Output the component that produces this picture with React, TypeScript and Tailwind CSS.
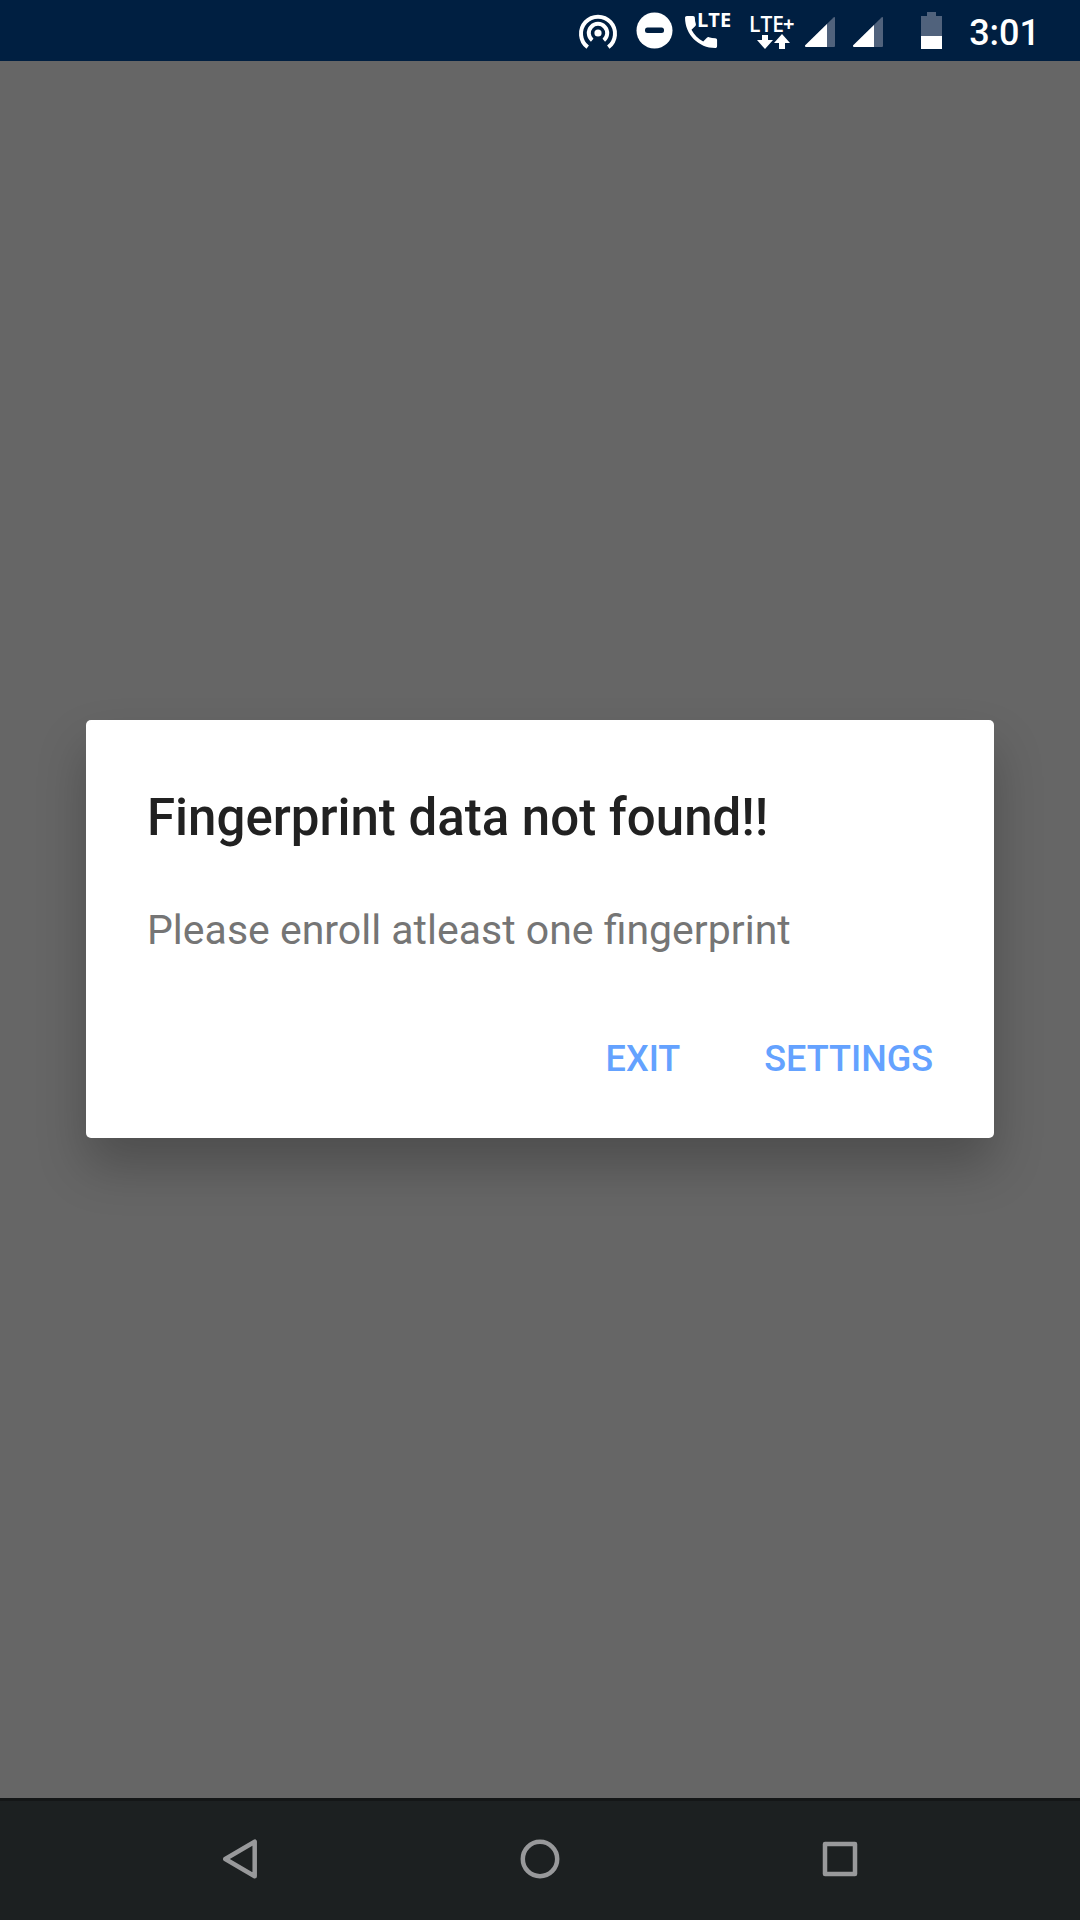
import React from "react";

function HotspotIcon() {
  return (
    <svg className="mr-[18px] h-[41px] w-10" viewBox="0 0 40 41" fill="none" stroke="#fff" strokeWidth="4" role="img" aria-label="Hotspot">
      <path d="M9.7 37.2 A17 17 0 1 1 30.3 37.2" />
      <path d="M14.2 30.2 A9.2 9.2 0 1 1 25.8 30.2" />
      <circle cx="20" cy="23" r="3.6" fill="#fff" stroke="none" />
    </svg>
  );
}

function DoNotDisturbIcon() {
  return (
    <svg className="mr-[10px] h-[41px] w-[38px]" viewBox="0 0 38 41" role="img" aria-label="Do not disturb">
      <circle cx="18.5" cy="20.5" r="18" fill="#fff" />
      <rect x="9" y="17.5" width="19" height="5.5" rx="2.5" fill="#001f41" />
    </svg>
  );
}

function LteCallIcon() {
  return (
    <svg className="mr-[18px] h-[41px] w-[48px] overflow-visible" viewBox="0 0 48 41" fill="#fff">
      <path
        transform="translate(-4.3 .6) scale(1.78)"
        d="M6.62 10.79c1.44 2.83 3.76 5.14 6.59 6.59l2.2-2.2c.27-.27.67-.36 1.02-.24 1.12.37 2.33.57 3.57.57.55 0 1 .45 1 1V20c0 .55-.45 1-1 1-9.39 0-17-7.61-17-17 0-.55.45-1 1-1h3.5c.55 0 1 .45 1 1 0 1.25.2 2.45.57 3.57.11.35.03.74-.25 1.02l-2.2 2.2z"
      />
      <text x="13" y="17" fontSize="20" fontWeight="700" fontFamily="'Open Sans', sans-serif">LTE</text>
    </svg>
  );
}

function LteDataIcon() {
  return (
    <svg className="mr-[9px] h-[41px] w-[46px] overflow-visible" viewBox="0 0 46 41" fill="#fff">
      <text x="-1" y="22" fontSize="21" fontWeight="600" fontFamily="'Open Sans', sans-serif">LTE</text>
      <text x="33" y="21" fontSize="20" fontWeight="700" fontFamily="'Open Sans', sans-serif">+</text>
      <path d="M12 25h6v5h5l-8 9-8-9h5z" />
      <path d="M29 39h6v-6h5l-8-9-8 9h5z" />
    </svg>
  );
}

function SignalIcon({ level }: { level: number }) {
  return (
    <svg className="mr-[18px] h-[41px] w-[30px]" viewBox="0 0 30 41" role="img" aria-label="Signal">
      <path d="M1 37Q0 37 0 35.500L28.500 7.500Q30 6.500 30 8V36Q30 37 29 37z" fill="#50627c" />
      <path d={`M1 37Q0 37 0 35.500L${level} ${36 - level}V37z`} fill="#fff" />
    </svg>
  );
}

function BatteryIcon() {
  return (
    <svg className="mr-[27px] ml-5 h-[41px] w-[21px]" viewBox="0 0 21 41" role="img" aria-label="Battery">
      <path d="M6 2h9v4h6v20H0V6h6z" fill="#50627c" />
      <path d="M0 26h21v13H0z" fill="#fff" />
    </svg>
  );
}

function StatusBar() {
  return (
    <header className="flex h-[61px] items-center justify-end bg-[#001f41] pr-10 text-white">
      <HotspotIcon />
      <DoNotDisturbIcon />
      <LteCallIcon />
      <LteDataIcon />
      <SignalIcon level={22} />
      <SignalIcon level={21} />
      <BatteryIcon />
      <time className="pt-1 text-[36px] leading-[44px] font-medium">3:01</time>
    </header>
  );
}

function FingerprintDialog() {
  return (
    <section
      role="alertdialog"
      aria-labelledby="dialog-title"
      aria-describedby="dialog-message"
      className="w-full rounded-[5px] bg-white pt-[67px] pb-[37px] shadow-[0_28px_50px_rgba(0,0,0,0.24)]"
    >
      <h1 id="dialog-title" className="px-[61px] text-[51px] leading-[62px] font-medium text-[#212121]">
        Fingerprint data not found!!
      </h1>
      <p id="dialog-message" className="mt-14 px-[61px] text-[41px] leading-[50px] text-[#757575]">
        Please enroll atleast one fingerprint
      </p>
      <div className="mt-[62px] flex justify-end gap-[42px] px-10 text-[36px] leading-[44px] font-medium text-[#64a2ff]">
        <button type="button" className="h-[84px] px-[21px]">EXIT</button>
        <button type="button" className="h-[84px] px-[21px]">SETTINGS</button>
      </div>
    </section>
  );
}

function NavigationBar() {
  return (
    <nav className="grid h-[122px] grid-cols-3 bg-[#1c2021] px-[90px] shadow-[inset_0_3px_0_#141617]">
      <button type="button" aria-label="Back" className="flex items-center justify-center">
        <svg className="size-11" viewBox="0 0 44 44" fill="none" stroke="#98999b" strokeWidth="4.500" strokeLinejoin="round">
          <path d="M36.700 4.700V39.300L7.300 22z" />
        </svg>
      </button>
      <button type="button" aria-label="Home" className="flex items-center justify-center">
        <svg className="size-11" viewBox="0 0 44 44" fill="none" stroke="#98999b" strokeWidth="4.500">
          <circle cx="22" cy="22" r="17.200" />
        </svg>
      </button>
      <button type="button" aria-label="Recent apps" className="flex items-center justify-center">
        <svg className="size-11" viewBox="0 0 44 44" fill="none" stroke="#98999b" strokeWidth="4.500" strokeLinejoin="round">
          <rect x="7" y="7" width="30" height="30" />
        </svg>
      </button>
    </nav>
  );
}

export default function App() {
  return (
    <div className="flex min-h-screen flex-col bg-[#666666] font-['Roboto',sans-serif]">
      <StatusBar />
      <main className="flex flex-1 items-center px-[86px] pb-px">
        <FingerprintDialog />
      </main>
      <NavigationBar />
    </div>
  );
}
